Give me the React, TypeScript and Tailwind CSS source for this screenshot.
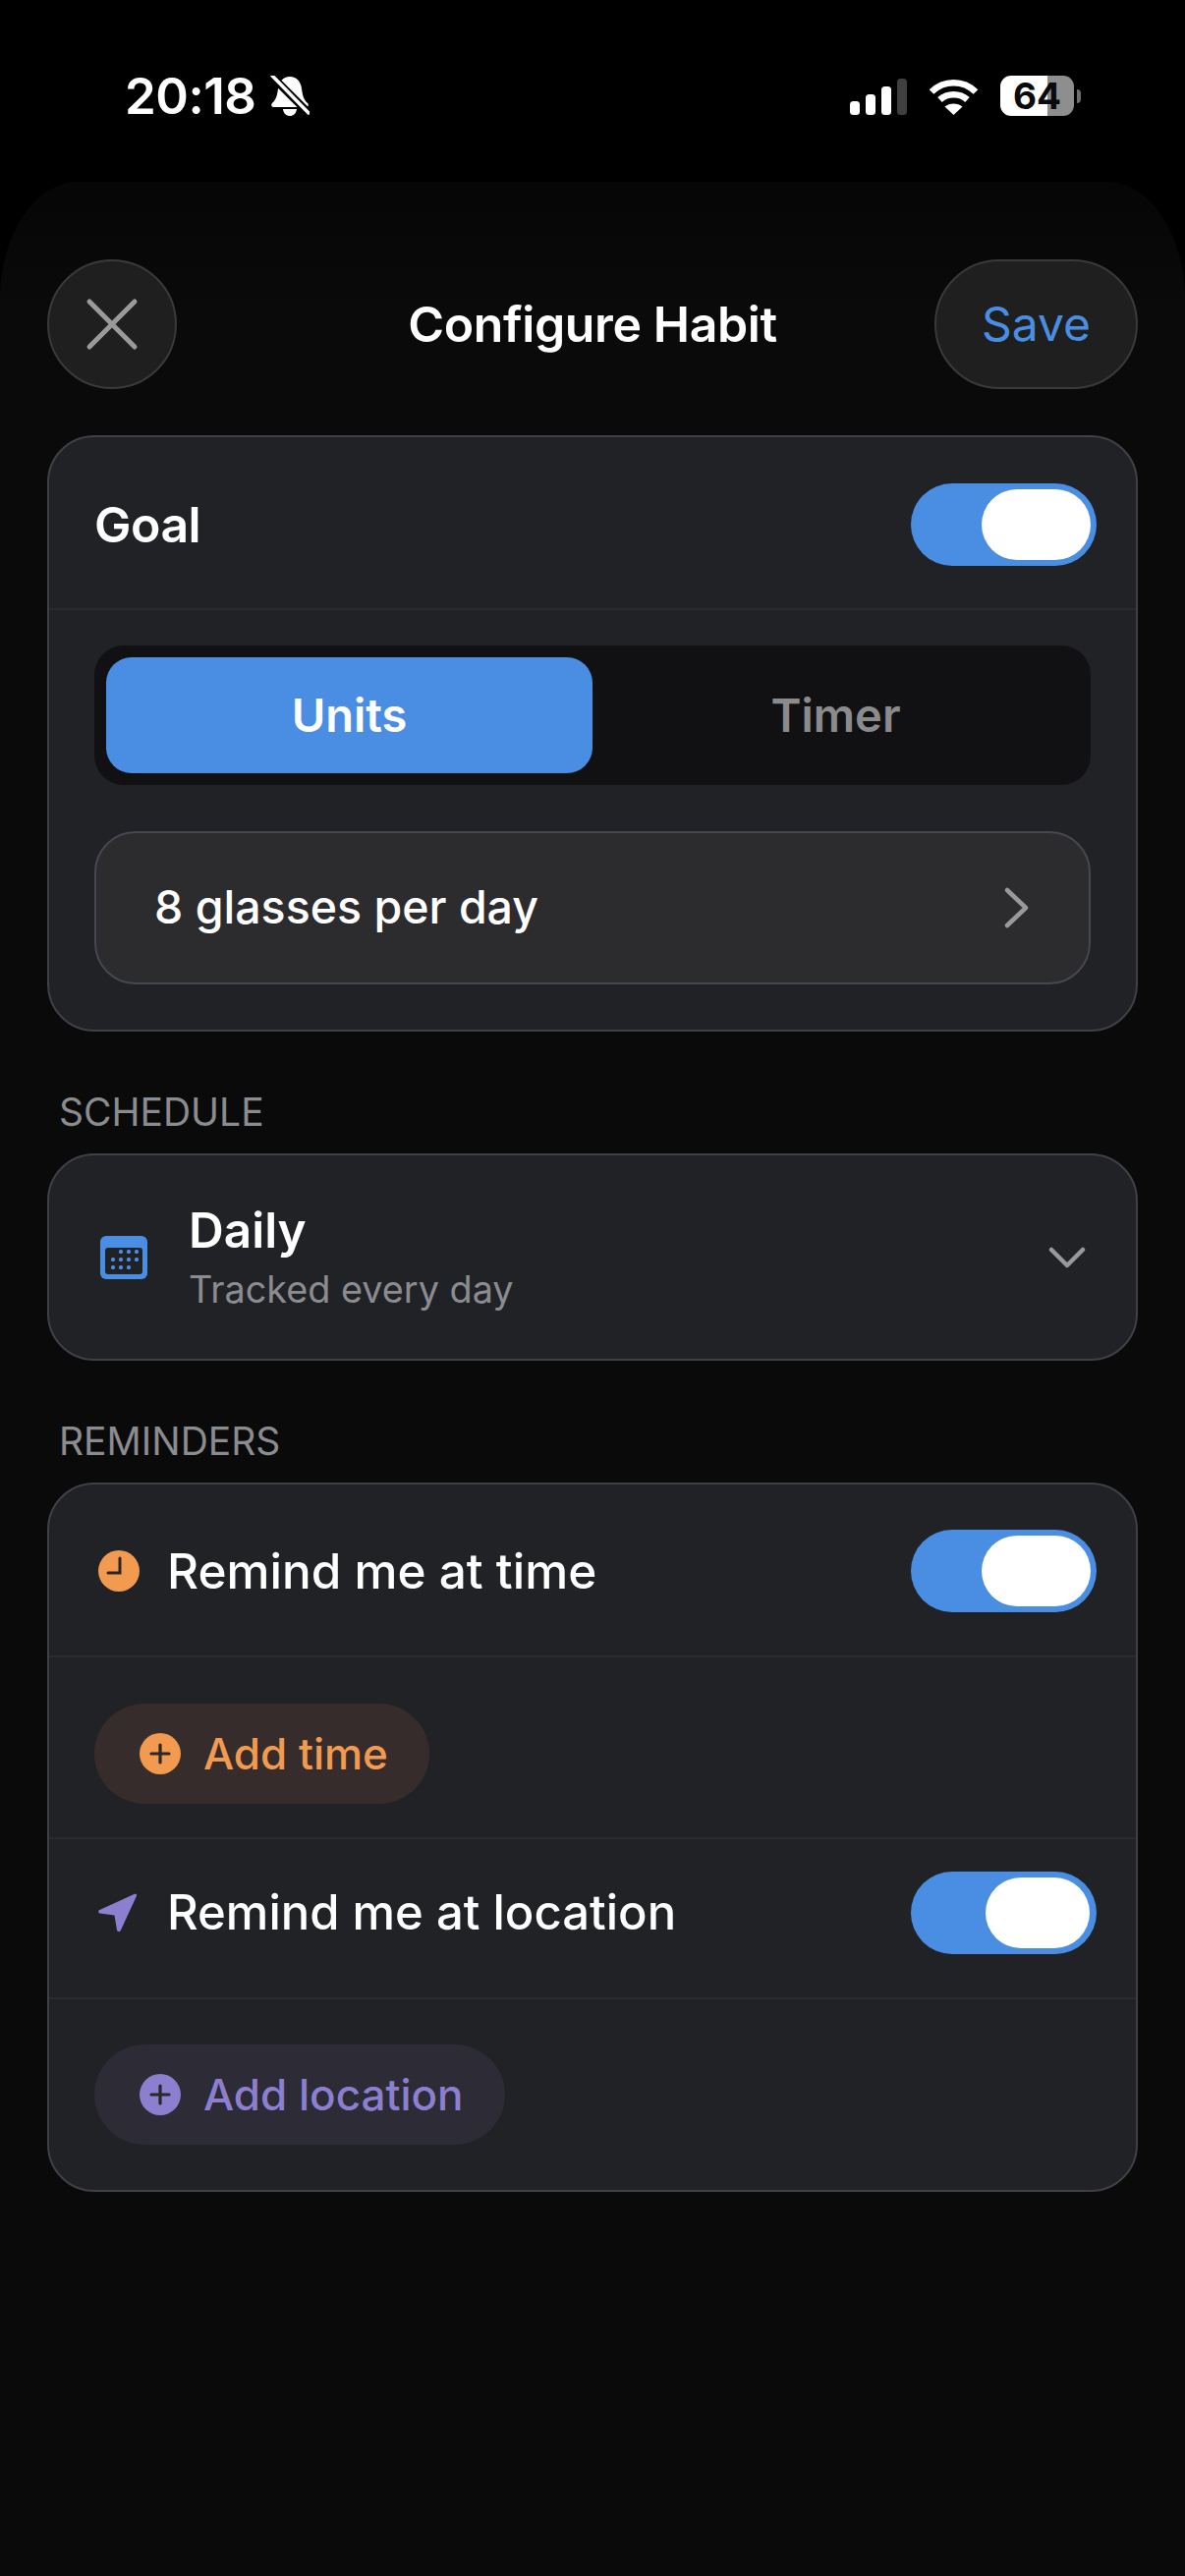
const FONT = "font-['Inter',sans-serif]";

function Toggle({ small }: { small?: boolean }) {
  return (
    <div className="flex h-[84px] w-[189px] items-center justify-end rounded-full bg-[#4a8ee3] pr-[6px]">
      <div className={small ? "mr-[1px] h-[72px] w-[106px] rounded-full bg-white" : "h-[72px] w-[111px] rounded-full bg-white"} />
    </div>
  );
}

function SignalIcon() {
  return (
    <svg width="58" height="37" viewBox="0 0 58 37">
      <rect x="0" y="23" width="10" height="14" rx="3.5" fill="#fff" />
      <rect x="16" y="16" width="10" height="21" rx="3.5" fill="#fff" />
      <rect x="32" y="8" width="10" height="29" rx="3.5" fill="#fff" />
      <rect x="48" y="0" width="10" height="37" rx="3.5" fill="#3f3f3f" />
    </svg>
  );
}

function WifiIcon() {
  return (
    <svg width="51" height="37" viewBox="0 0 51 37" fill="none" stroke="#fff" strokeWidth="6.5">
      <path d="M3 13.5C15.5 1 35.5 1 48 13.5" />
      <path d="M11.5 21.5C19 14.5 32 14.5 39.5 21.5" />
      <path d="M25.5 37L16.5 28.5C21.5 24.5 29.5 24.5 34.5 28.5Z" fill="#fff" stroke="none" />
    </svg>
  );
}

function BellSlash() {
  return (
    <svg width="40" height="42" viewBox="0 0 40 42">
      <path
        d="M20 1C13 1 9 6.5 8 13C7.2 19 6.5 24 2 28C0.5 29.5 1 32 4 32H36C39 32 39.5 29.5 38 28C33.5 24 32.8 19 32 13C31 6.5 27 1 20 1Z"
        fill="#fff"
      />
      <path d="M13 34H27C26.5 38.5 23.5 41 20 41C16.5 41 13.5 38.5 13 34Z" fill="#fff" />
      <path d="M0 -1L40 39" stroke="#000" strokeWidth="8" />
      <path d="M2 0L39 38" stroke="#fff" strokeWidth="3.5" strokeLinecap="round" />
    </svg>
  );
}

function CalendarIcon() {
  const dots = [
    [21, 17], [29, 17], [37, 17],
    [13, 25], [21, 25], [29, 25], [37, 25],
    [13, 33], [21, 33], [29, 33],
  ];
  return (
    <svg width="48" height="44" viewBox="0 0 48 44">
      <rect width="48" height="44" rx="6" fill="#4a8ee3" />
      <rect x="5" y="12" width="38" height="27" rx="3" fill="#212226" />
      {dots.map(([x, y]) => (
        <rect key={`${x}-${y}`} x={x - 2} y={y - 3} width="4" height="4" rx="1.5" fill="#4a8ee3" />
      ))}
    </svg>
  );
}

function ClockIcon() {
  return (
    <svg width="42" height="42" viewBox="0 0 42 42">
      <circle cx="21" cy="21" r="21" fill="#f29b50" />
      <path d="M22 8V23H10" fill="none" stroke="#2a2422" strokeWidth="3" strokeLinecap="round" />
    </svg>
  );
}

function PlusCircle({ color }: { color: string }) {
  return (
    <svg width="42" height="42" viewBox="0 0 42 42">
      <circle cx="21" cy="21" r="21" fill={color} />
      <path d="M21 12V30M12 21H30" fill="none" stroke="#2a2828" strokeWidth="3.2" strokeLinecap="round" />
    </svg>
  );
}

function NavIcon() {
  return (
    <svg width="40" height="40" viewBox="0 0 40 40">
      <path
        d="M37 0.8C38.5 0.3 39.5 1.3 39 2.8L23 37.5C22 39.5 19.5 39.5 19 37.5L16.5 22.5L1.5 20.5C-0.3 20 -0.3 17.8 1.5 17Z"
        fill="#8c7fd0"
      />
    </svg>
  );
}

function AddPill({ label, pill, text, color }: { label: string; pill: string; text: string; color: string }) {
  return (
    <div className={`flex h-[102px] w-fit items-center gap-[23px] rounded-full pl-[46px] pr-[42px] ${pill}`}>
      <PlusCircle color={color} />
      <span className={`text-[44px] font-[450] ${text}`}>{label}</span>
    </div>
  );
}

function SectionLabel({ children }: { children: string }) {
  return (
    <div className="flex h-[124px] items-end pb-[19px] pl-[12px] text-[39px] leading-[46px] text-[#8b8c90]">
      {children}
    </div>
  );
}

const CARD = "rounded-[48px] border-2 border-[#404147] bg-[#212226]";

export default function App() {
  return (
    <div className={`flex h-[2622px] w-[1206px] flex-col overflow-hidden bg-black text-white ${FONT}`}>
      {/* status bar */}
      <div className="flex h-[185px] shrink-0 items-start justify-between pl-[127px] pr-[106px] pt-[77px]">
        <div className="flex items-center gap-[15px]">
          <span className="text-[51px] font-semibold leading-[42px] tracking-[-0.01em]">20:18</span>
          <BellSlash />
        </div>
        <div className="flex items-center">
          <div className="mt-[2px] flex items-center">
            <SignalIcon />
          </div>
          <div className="ml-[22px] mt-[2px] flex">
            <WifiIcon />
          </div>
          <div className="ml-[22px] flex h-[41px] w-[75px] items-center justify-center rounded-[11px] bg-[linear-gradient(90deg,#fff_64%,#8e8e8e_64%)] text-[37px] font-bold text-[#0a0a0a]">
            64
          </div>
          <div className="ml-[3px] h-[14px] w-[4px] rounded-r-full bg-[#6e6e6e]" />
        </div>
      </div>

      {/* sheet */}
      <div className="flex-1 rounded-t-[80px_120px] bg-[linear-gradient(180deg,#060606_0px,#0a0a0a_140px)] px-[48px] pt-[79px]">
        <div className="grid h-[132px] grid-cols-[207px_1fr_207px] items-center">
          <div className="flex h-[132px] w-[132px] items-center justify-center rounded-full border-2 border-[#3a3a3c] bg-[#1f1f20]">
            <svg width="54" height="54" viewBox="0 0 54 54" fill="none" stroke="#9a9a9c" strokeWidth="5" strokeLinecap="round">
              <path d="M4 4L50 50M50 4L4 50" />
            </svg>
          </div>
          <div className="text-center text-[50px] font-semibold tracking-[-0.008em]">Configure Habit</div>
          <div className="flex h-[132px] w-[207px] items-center justify-center rounded-[66px] border-2 border-[#3a3a3c] bg-[#1f1f20] text-[48px] text-[#4a8ee3]">
            Save
          </div>
        </div>

        {/* goal */}
        <div className={`mt-[47px] h-[607px] ${CARD}`}>
          <div className="flex h-[176px] items-center justify-between border-b-2 border-[#2a2b2f] pl-[46px] pr-[40px] pt-[3px]">
            <span className="mt-[2px] text-[50px] font-semibold tracking-[-0.01em]">Goal</span>
            <Toggle />
          </div>
          <div className="flex flex-col gap-[47px] px-[46px] pt-[36px]">
            <div className="flex h-[142px] items-center rounded-[30px] bg-[#111113] p-[12px] text-[47px] font-semibold">
              <div className="flex h-[118px] w-[495px] items-center justify-center rounded-[26px] bg-[#4a8ee3]">Units</div>
              <div className="flex-1 text-center text-[#8b8b8e]">Timer</div>
            </div>
            <div className="flex h-[156px] items-center justify-between rounded-[42px] border-2 border-[#47484f] bg-[#2c2c2f] pl-[59px] pr-[61px]">
              <span className="text-[46.5px] font-[450]">8 glasses per day</span>
              <svg width="25" height="42" viewBox="0 0 25 42" fill="none" stroke="#99999c" strokeWidth="4.5" strokeLinecap="round" strokeLinejoin="round">
                <path d="M3 3L22 21L3 39" />
              </svg>
            </div>
          </div>
        </div>

        <SectionLabel>SCHEDULE</SectionLabel>
        <div className={`flex h-[211px] items-center justify-between pl-[52px] pr-[51px] ${CARD}`}>
          <div className="flex items-center gap-[42px]">
            <CalendarIcon />
            <div>
              <div className="-mt-[1px] text-[49.5px] font-semibold leading-[60px]">Daily</div>
              <div className="mt-[5px] text-[37.8px] leading-[50px] text-[#8b8c90]">Tracked every day</div>
            </div>
          </div>
          <svg width="38" height="22" viewBox="0 0 38 22" fill="none" stroke="#99999c" strokeWidth="4.5" strokeLinecap="round" strokeLinejoin="round">
            <path d="M3 3L19 19L35 3" />
          </svg>
        </div>

        <SectionLabel>REMINDERS</SectionLabel>
        <div className={`h-[722px] ${CARD}`}>
          <div className="flex h-[176px] items-center justify-between border-b-2 border-[#2a2b2f] pl-[50px] pr-[40px] pt-[2px]">
            <div className="flex items-center gap-[28px]">
              <ClockIcon />
              <span className="text-[49.5px] font-[450]">Remind me at time</span>
            </div>
            <Toggle />
          </div>
          <div className="h-[185px] border-b-2 border-[#2a2b2f] pl-[46px] pt-[47px]">
            <AddPill label="Add time" pill="bg-[#362c2b]" text="text-[#f29b50]" color="#f29b50" />
          </div>
          <div className="flex h-[163px] items-start justify-between border-b-2 border-[#2a2b2f] pl-[50px] pr-[40px] pt-[33px]">
            <div className="flex h-[84px] items-center gap-[30px]">
              <NavIcon />
              <span className="text-[49px] font-[450]">Remind me at location</span>
            </div>
            <Toggle small />
          </div>
          <div className="pl-[46px] pt-[46px]">
            <AddPill label="Add location" pill="bg-[#2c2b36]" text="text-[#8c7fd0]" color="#8c7fd0" />
          </div>
        </div>
      </div>
    </div>
  );
}
